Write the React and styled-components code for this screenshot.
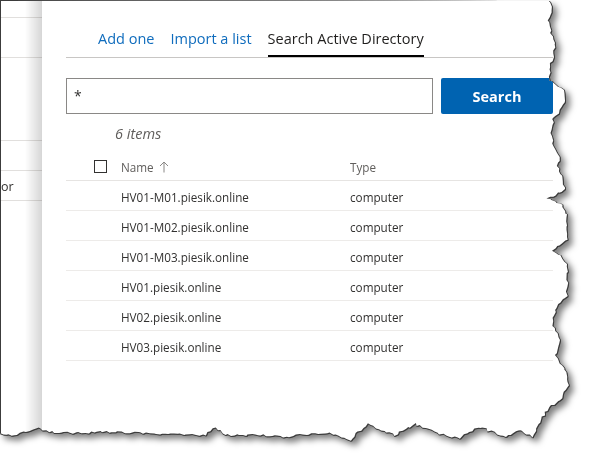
import React from 'react'
import styled, { createGlobalStyle } from 'styled-components'

const GlobalStyle = createGlobalStyle`
  html, body {
    margin: 0;
    padding: 0;
    background: #fff;
  }
  body {
    font-family: 'Open Sans', 'Noto Sans', sans-serif;
    color: #323130;
  }
`

// torn paper outline: key points, then small jitter in between
const rightEdge = [
  [550, 0], [552, 10], [548, 20], [551, 33], [555, 45], [553, 57], [550, 67], [549, 80],
  [563, 90], [565, 100], [560, 110], [553, 120], [551, 135], [555, 150], [560, 160],
  [558, 165], [563, 178], [565, 190], [547, 198], [562, 205], [566, 215], [567, 240],
  [553, 250], [568, 265], [567, 280], [567, 295], [555, 310], [553, 325], [560, 340],
  [555, 355], [565, 370], [568, 385], [560, 400], [547, 410], [538, 425], [532, 437],
]
const bottomEdge = [
  [520, 430], [505, 437], [480, 427], [460, 438], [440, 434], [415, 424], [395, 435],
  [367, 424], [350, 440], [330, 433], [300, 435], [290, 437], [260, 435], [225, 435],
  [215, 427], [205, 435], [150, 433], [100, 432], [55, 433], [35, 428], [15, 436], [0, 433],
]

let seed = 7
const rand = () => {
  seed = (seed * 16807) % 2147483647
  return seed / 2147483647 - 0.5
}

const tornPath = (() => {
  const pts = [...rightEdge, ...bottomEdge]
  const out = [[0, 0]]
  for (let i = 0; i < pts.length - 1; i++) {
    const [x1, y1] = pts[i]
    const [x2, y2] = pts[i + 1]
    const steps = Math.max(1, Math.round(Math.hypot(x2 - x1, y2 - y1) / 3))
    for (let s = 0; s < steps; s++) {
      const t = s / steps
      out.push([x1 + (x2 - x1) * t + rand() * 2.4, y1 + (y2 - y1) * t + rand() * 2.4])
    }
  }
  out.push(pts[pts.length - 1])
  return out.map(([x, y]) => `${x.toFixed(1)}px ${y.toFixed(1)}px`).join(', ')
})()

const Canvas = styled.div`
  width: 592px;
  height: 466px;
  overflow: hidden;
  background: #fff;
`

const Paper = styled.div`
  width: 592px;
  height: 466px;
  filter: drop-shadow(1px 0 0 #3c3c3c) drop-shadow(0 1px 0 #3c3c3c)
    drop-shadow(4px 4px 3px rgba(0, 0, 0, 0.5));
`

const Sheet = styled.div`
  box-sizing: border-box;
  width: 592px;
  height: 466px;
  display: flex;
  background: #fff;
  border-top: 1px solid #3c3c3c;
  border-left: 1px solid #3c3c3c;
  clip-path: polygon(${tornPath});
`

const SidePanel = styled.div`
  position: relative;
  width: 41px;
  flex: none;
  display: flex;
  flex-direction: column;
  &::after {
    content: '';
    position: absolute;
    top: 0;
    bottom: 0;
    right: 0;
    width: 17px;
    background: linear-gradient(to right, rgba(0, 0, 0, 0), rgba(0, 0, 0, 0.16));
  }
`

const SideRow = styled.div`
  height: ${(p) => p.$h}px;
  flex: none;
  border-bottom: 1px solid #e1dfdd;
  display: flex;
  align-items: center;
  font-size: 12.5px;
  color: #323130;
  padding-top: 2px;
  box-sizing: border-box;
`

const Main = styled.div`
  flex: 1;
  padding: 0 39px 0 24px;
  display: flex;
  flex-direction: column;
`

const TabBar = styled.div`
  display: flex;
  gap: 16px;
  padding: 23px 0 0 32px;
  border-bottom: 1px solid #c8c6c4;
`

const Tab = styled.div`
  font-size: 14.5px;
  line-height: 30px;
  color: ${(p) => (p.$active ? '#201f1e' : '#0f6cbd')};
  border-bottom: 2px solid ${(p) => (p.$active ? '#000' : 'transparent')};
  padding-bottom: 1px;
`

const SearchRow = styled.div`
  display: flex;
  gap: 8px;
  margin-top: 20px;
`

const SearchInput = styled.div`
  flex: 1;
  height: 36px;
  box-sizing: border-box;
  border: 1px solid #8a8886;
  padding: 7px 9px 8px 7px;
  font-size: 14px;
`

const SearchButton = styled.button`
  width: 112px;
  height: 36px;
  border: none;
  border-radius: 2px;
  background: #0063b1;
  color: #fff;
  font-family: 'Open Sans', sans-serif;
  font-weight: 700;
  font-size: 14.5px;
`

const Count = styled.div`
  margin: 10px 0 0 49px;
  font-size: 14.5px;
  font-style: italic;
  color: #605e5c;
  line-height: 20px;
`

const Table = styled.div`
  margin-top: 9px;
  display: flex;
  flex-direction: column;
`

const Row = styled.div`
  display: grid;
  grid-template-columns: 55px 229px 1fr;
  align-items: center;
  height: ${(p) => (p.$head ? 28 : 30)}px;
  box-sizing: border-box;
  padding-top: ${(p) => (p.$head ? 0 : 2)}px;
  border-bottom: 1px solid ${(p) => (p.$head ? '#e6e4e2' : '#edebe9')};
  font-size: 11.7px;
  color: ${(p) => (p.$head ? '#605e5c' : '#323130')};
`

const Check = styled.span`
  justify-self: end;
  margin-right: 14px;
  width: 11px;
  height: 11px;
  border: 1px solid #323130;
`

const Arrow = styled.svg`
  margin-left: 5px;
  vertical-align: -1px;
`

const items = [
  'HV01-M01.piesik.online',
  'HV01-M02.piesik.online',
  'HV01-M03.piesik.online',
  'HV01.piesik.online',
  'HV02.piesik.online',
  'HV03.piesik.online',
]

export default function App() {
  return (
    <Canvas>
      <GlobalStyle />
      <Paper>
        <Sheet>
          <SidePanel>
            <SideRow $h={17} />
            <SideRow $h={40} />
            <SideRow $h={83} />
            <SideRow $h={30} />
            <SideRow $h={30}>or</SideRow>
          </SidePanel>
          <Main>
            <TabBar>
              <Tab>Add one</Tab>
              <Tab>Import a list</Tab>
              <Tab $active>Search Active Directory</Tab>
            </TabBar>
            <SearchRow>
              <SearchInput>*</SearchInput>
              <SearchButton>Search</SearchButton>
            </SearchRow>
            <Count>6 items</Count>
            <Table>
              <Row $head>
                <Check />
                <span>
                  Name
                  <Arrow width="10" height="12" viewBox="0 0 10 12">
                    <path d="M5 11.5V1M1 5l4-4 4 4" fill="none" stroke="#8a8886" strokeWidth="1" />
                  </Arrow>
                </span>
                <span>Type</span>
              </Row>
              {items.map((name) => (
                <Row key={name}>
                  <span />
                  <span>{name}</span>
                  <span>computer</span>
                </Row>
              ))}
            </Table>
          </Main>
        </Sheet>
      </Paper>
    </Canvas>
  )
}
